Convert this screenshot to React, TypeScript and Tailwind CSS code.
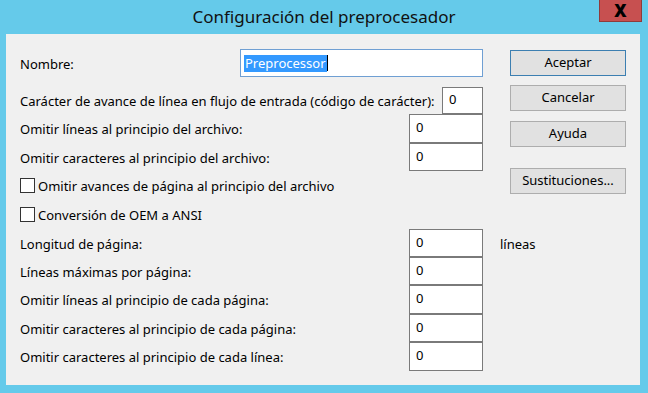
import React from "react";

const font = { fontFamily: '"Noto Sans", "Liberation Sans", Arial, sans-serif' };

function Field({ w = "w-[74px]", h = "h-[28px]" }: { w?: string; h?: string }) {
  return (
    <div
      className={`${w} ${h} shrink-0 bg-white border border-[#7a7a7a] pl-[6px] pb-px flex items-center text-black`}
    >
      0
    </div>
  );
}

function FieldRow({
  label,
  h = "h-[28px]",
  suffix,
}: {
  label: string;
  h?: string;
  suffix?: string;
}) {
  return (
    <div className="flex items-center">
      <div className={`w-[463px] ${h} flex items-center justify-between`}>
        <span className="pt-[3px]">{label}</span>
        <Field h={h} />
      </div>
      {suffix && <span className="ml-[17px] pt-[3px]">{suffix}</span>}
    </div>
  );
}

function CheckRow({ label }: { label: string }) {
  return (
    <div className="h-[29px] flex items-center">
      <div className="w-[15px] h-[15px] bg-white border border-[#333333]" />
      <span className="ml-[3px] pt-[3px]">{label}</span>
    </div>
  );
}

function Btn({ label, primary }: { label: string; primary?: boolean }) {
  return (
    <button
      className={`w-[116px] h-[26px] bg-[#e1e1e1] border text-[13px] text-black ${
        primary ? "border-[#3c7fb1]" : "border-[#adadad]"
      }`}
      style={font}
    >
      {label}
    </button>
  );
}

export default function App() {
  return (
    <div
      className="relative w-[648px] h-[393px] bg-[#65caea] text-[13px] text-black overflow-hidden"
      style={font}
    >
      {/* title bar */}
      <div className="h-[34px] flex items-center justify-center">
        <span className="text-[17px] text-[#111]">Configuración del preprocesador</span>
      </div>
      <div className="absolute top-0 right-[6px] w-[43px] h-[22px] bg-[#c75050] border border-[#8f3b3b] border-t-0 flex items-center justify-center">
        <span className="text-[17px] font-black leading-none">X</span>
      </div>

      {/* client area */}
      <div className="ml-[6px] mr-[8px] h-[351px] bg-[#f0f0f0] pl-[14px] pt-[15px] flex flex-col">
        <div className="flex">
          <div className="flex flex-col w-[463px]">
            <div className="h-[28px] flex items-center justify-between">
              <span className="pt-[3px]">Nombre:</span>
              <div className="w-[243px] h-[28px] bg-white border border-[#6f9fd3] flex items-center pl-[3px]">
                <span className="bg-[#3399ff] text-white px-px leading-[17px]">Preprocessor</span>
                <span className="w-px h-[16px] bg-black" />
              </div>
            </div>
            <div className="mt-[10px] h-[27px] flex items-center justify-between">
              <span className="pt-[3px]">
                Carácter de avance de línea en flujo de entrada (código de carácter):
              </span>
              <Field w="w-[41px]" h="h-[27px]" />
            </div>
            <div className="h-[29px] flex items-center justify-between">
              <span className="pt-[3px]">Omitir líneas al principio del archivo:</span>
              <Field h="h-[29px]" />
            </div>
            <div className="h-[28px] flex items-center justify-between">
              <span className="pt-[3px]">Omitir caracteres al principio del archivo:</span>
              <Field />
            </div>
            <CheckRow label="Omitir avances de página al principio del archivo" />
            <CheckRow label="Conversión de OEM a ANSI" />
          </div>
          <div className="ml-[27px] pt-px flex flex-col">
            <Btn label="Aceptar" primary />
            <div className="mt-[9px]">
              <Btn label="Cancelar" />
            </div>
            <div className="mt-[10px]">
              <Btn label="Ayuda" />
            </div>
            <div className="mt-[21px]">
              <Btn label="Sustituciones..." />
            </div>
          </div>
        </div>
        <FieldRow label="Longitud de página:" suffix="líneas" />
        <FieldRow label="Líneas máximas por página:" />
        <FieldRow label="Omitir líneas al principio de cada página:" h="h-[29px]" />
        <FieldRow label="Omitir caracteres al principio de cada página:" />
        <FieldRow label="Omitir caracteres al principio de cada línea:" h="h-[29px]" />
      </div>
    </div>
  );
}
